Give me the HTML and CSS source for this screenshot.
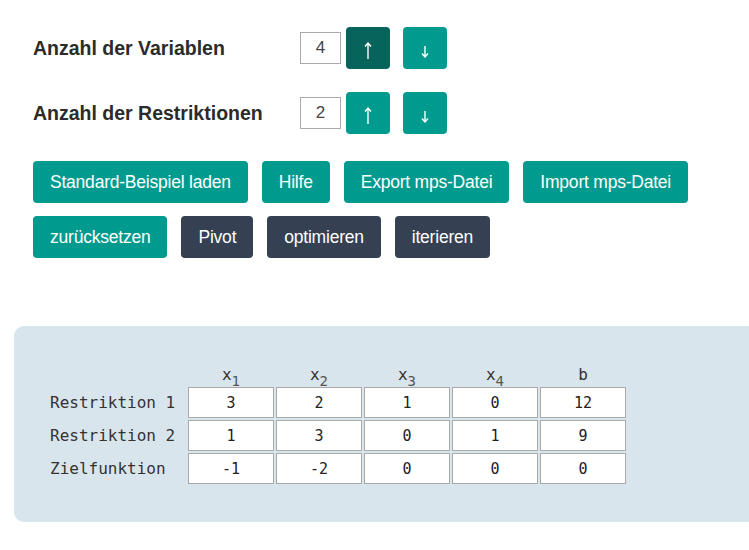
FILE: index.html
```html
<!DOCTYPE html>
<html lang="de">
<head>
<meta charset="utf-8">
<title>Simplex</title>
<link rel="stylesheet" href="styles.css">
</head>
<body>
<div class="controls">
  <div class="counter">
    <span class="counter-label">Anzahl der Variablen</span>
    <span class="num">4</span>
    <button class="btn arrow active" aria-label="erhöhen"><svg class="ico-up" width="8" height="17" viewBox="0 0 8 17"><path d="M4 1 V17 M1 4.5 L4 1 L7 4.5" fill="none" stroke="#ffffff" stroke-width="1.4"/></svg></button>
    <button class="btn arrow" aria-label="verringern"><svg class="ico-down" width="8" height="12" viewBox="0 0 8 12"><path d="M4 0 V11 M1 7.5 L4 11 L7 7.5" fill="none" stroke="#ffffff" stroke-width="1.4"/></svg></button>
  </div>
  <div class="counter">
    <span class="counter-label">Anzahl der Restriktionen</span>
    <span class="num">2</span>
    <button class="btn arrow" aria-label="erhöhen"><svg class="ico-up" width="8" height="17" viewBox="0 0 8 17"><path d="M4 1 V17 M1 4.5 L4 1 L7 4.5" fill="none" stroke="#ffffff" stroke-width="1.4"/></svg></button>
    <button class="btn arrow" aria-label="verringern"><svg class="ico-down" width="8" height="12" viewBox="0 0 8 12"><path d="M4 0 V11 M1 7.5 L4 11 L7 7.5" fill="none" stroke="#ffffff" stroke-width="1.4"/></svg></button>
  </div>
  <div class="btn-row first">
    <button class="btn">Standard-Beispiel laden</button>
    <button class="btn">Hilfe</button>
    <button class="btn">Export mps-Datei</button>
    <button class="btn">Import mps-Datei</button>
  </div>
  <div class="btn-row">
    <button class="btn">zurücksetzen</button>
    <button class="btn dark">Pivot</button>
    <button class="btn dark">optimieren</button>
    <button class="btn dark">iterieren</button>
  </div>
</div>
<div class="panel">
  <table class="tableau">
    <thead>
      <tr>
        <th class="rowlabel"></th>
        <th>x<sub>1</sub></th>
        <th>x<sub>2</sub></th>
        <th>x<sub>3</sub></th>
        <th>x<sub>4</sub></th>
        <th>b</th>
      </tr>
    </thead>
    <tbody>
      <tr>
        <td class="rowlabel">Restriktion 1</td>
        <td><span class="cell">3</span></td>
        <td><span class="cell">2</span></td>
        <td><span class="cell">1</span></td>
        <td><span class="cell">0</span></td>
        <td><span class="cell">12</span></td>
      </tr>
      <tr>
        <td class="rowlabel">Restriktion 2</td>
        <td><span class="cell">1</span></td>
        <td><span class="cell">3</span></td>
        <td><span class="cell">0</span></td>
        <td><span class="cell">1</span></td>
        <td><span class="cell">9</span></td>
      </tr>
      <tr>
        <td class="rowlabel">Zielfunktion</td>
        <td><span class="cell">-1</span></td>
        <td><span class="cell">-2</span></td>
        <td><span class="cell">0</span></td>
        <td><span class="cell">0</span></td>
        <td><span class="cell">0</span></td>
      </tr>
    </tbody>
  </table>
</div>
</body>
</html>
```
FILE: styles.css
```css
html {
  overflow-x: hidden;
}
body {
  margin: 0;
  background: #ffffff;
  font-family: "Liberation Sans", Arial, sans-serif;
  color: #2b2b2b;
}
.controls {
  padding: 27px 0 0 33px;
}
.counter {
  display: flex;
  align-items: center;
  height: 42px;
  margin-bottom: 23px;
}
.counter-label {
  width: 267px;
  font-weight: bold;
  font-size: 19.5px;
  color: #2b2b2b;
}
.num {
  box-sizing: border-box;
  width: 41px;
  height: 32px;
  border: 1px solid #aaaaaa;
  display: flex;
  align-items: center;
  justify-content: center;
  font-size: 17px;
  color: #444444;
  margin-right: 5px;
}
.btn {
  box-sizing: border-box;
  height: 42px;
  border: none;
  border-radius: 4px;
  background: #009b8e;
  color: #ffffff;
  font-family: "Liberation Sans", Arial, sans-serif;
  font-size: 17.5px;
  letter-spacing: -0.22px;
  padding: 0 17px;
  margin: 0;
}
.btn.dark {
  background: #354052;
}
.arrow {
  width: 44px;
  padding: 0 0 10px 0;
  display: flex;
  align-items: flex-end;
  justify-content: center;
}
.arrow svg {
  display: block;
}
.arrow .ico-down {
  margin-bottom: 1px;
}
.arrow + .arrow {
  margin-left: 13px;
}
.arrow.active {
  background: #06645d;
}
.btn-row {
  display: flex;
  gap: 14px;
  margin-bottom: 13px;
}
.btn-row.first {
  margin-top: 27px;
}
.panel {
  margin: 68px -40px 0 14px;
  background: #d9e5ec;
  border-radius: 10px;
  padding: 37px 0 36px 34px;
}
.tableau {
  border-collapse: separate;
  border-spacing: 2px;
  font-family: "DejaVu Sans Mono", monospace;
  font-size: 16px;
  color: #333333;
}
.tableau th {
  height: 20px;
  line-height: 20px;
  padding: 0;
  font-weight: normal;
  text-align: center;
  vertical-align: bottom;
}
.tableau th sub {
  font-size: 14px;
  line-height: 0;
  vertical-align: -6px;
  color: #555555;
}
.tableau td {
  padding: 0;
}
.tableau .rowlabel {
  width: 136px;
  text-align: left;
  white-space: nowrap;
}
.cell {
  box-sizing: border-box;
  display: flex;
  align-items: center;
  justify-content: center;
  width: 86px;
  height: 31px;
  background: #ffffff;
  border: 1px solid #aaaaaa;
  font-size: 15px;
  color: #222222;
}
```
